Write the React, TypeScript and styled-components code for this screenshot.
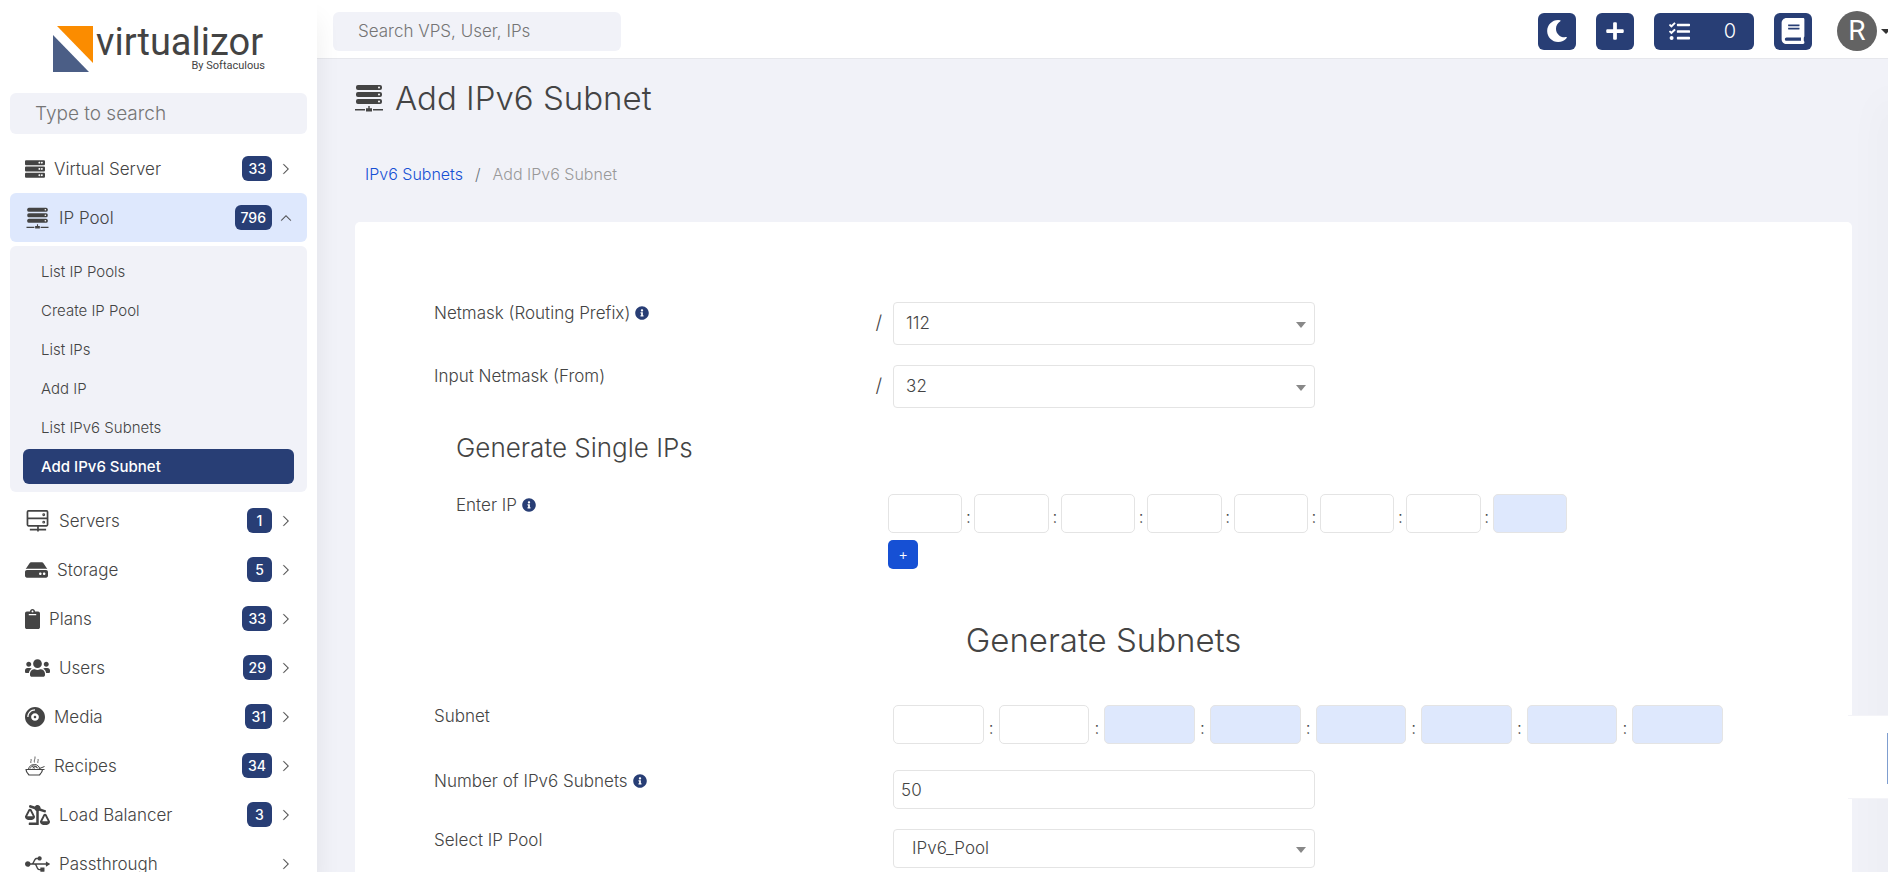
import React from "react";
import styled, { createGlobalStyle, css } from "styled-components";
import {
  FaBalanceScaleRight,
  FaBook,
  FaClipboard,
  FaCompactDisc,
  FaHdd,
  FaInfoCircle,
  FaMoon,
  FaPlus,
  FaServer,
  FaTasks,
  FaUsb,
  FaUsers,
} from "react-icons/fa";
import { BsChevronRight, BsChevronUp } from "react-icons/bs";

const navy = "#283e75";
const pale = "#dee8fd";
const surface = "#f1f2f8";
const line = "#e4e4e4";
const ink = "#444444";

const GlobalStyle = createGlobalStyle`
  *, *::before, *::after { box-sizing: border-box; }
  html { scrollbar-width: none; }
  body {
    margin: 0;
    background: ${surface};
    color: ${ink};
    font-family: Inter, "Open Sans", sans-serif;
    font-size: 17px;
    font-weight: 350;
    line-height: 24px;
  }
  button, input, select { font: inherit; color: inherit; }
  a { color: inherit; text-decoration: none; }
  h1, h2, h3, ul, ol { margin: 0; padding: 0; font-weight: 350; }
  ul, ol { list-style: none; }
`;

const Layout = styled.div`
  display: grid;
  grid-template-columns: 317px minmax(0, 1fr);
  min-height: 100vh;
`;

/* Sidebar */

const SidebarColumn = styled.aside`
  position: sticky;
  top: 0;
  z-index: 3;
  height: 100vh;
  box-shadow: 0 20px 24px rgba(0, 0, 0, 0.07);
`;

const Sidebar = styled.div`
  height: 100%;
  padding: 16px 10px 0;
  overflow: hidden;
  background: #fff;
`;

const LogoLink = styled.a`
  display: flex;
  justify-content: center;
  height: 58px;
  margin-bottom: 19px;
`;

const SearchInput = styled.input<{ $size: "side" | "top" }>`
  display: block;
  width: ${(p) => (p.$size === "side" ? "100%" : "288px")};
  height: ${(p) => (p.$size === "side" ? "41px" : "39px")};
  padding: 0 25px;
  border: 0;
  border-radius: 6px;
  background: ${surface};
  font-size: ${(p) => (p.$size === "side" ? "19px" : "17px")};
  outline: none;
  &::placeholder { color: #757575; opacity: 1; }
`;

const MenuList = styled.ul`
  margin-top: 10px;
`;

const MenuLink = styled.a<{ $open?: boolean }>`
  display: flex;
  align-items: center;
  height: 49px;
  padding: 0 15px;
  border-radius: 6px;
  background: ${(p) => (p.$open ? pale : "transparent")};
`;

const MenuIcon = styled.span<{ $width: number }>`
  display: flex;
  width: ${(p) => p.$width}px;
  margin-right: 9px;
  svg { width: 100%; height: 22px; }
`;

const MenuText = styled.span`
  flex: 1;
`;

const Badge = styled.span`
  min-width: 25px;
  padding: 0 6px;
  border-radius: 6px;
  background: ${navy};
  color: #fff;
  font-size: 14px;
  font-weight: 500;
  line-height: 25px;
  text-align: center;
`;

const Chevron = styled.span`
  display: flex;
  justify-content: center;
  width: 12px;
  margin-left: 8px;
  svg { width: 12px; height: 12px; stroke: ${ink}; stroke-width: 0.4px; }
`;

const Submenu = styled.ul`
  display: flex;
  flex-direction: column;
  gap: 4px;
  margin: 4px 0;
  padding: 8px 13px;
  border-radius: 6px;
  background: ${surface};
`;

const SubmenuLink = styled.a<{ $active?: boolean }>`
  display: block;
  padding: 0 18px;
  border-radius: 6px;
  font-size: 15px;
  line-height: 35px;
  ${(p) =>
    p.$active &&
    css`
      background: ${navy};
      color: #fff;
      font-weight: 500;
    `}
`;

/* Top bar */

const Content = styled.div`
  min-width: 0;
`;

const TopBar = styled.header`
  display: flex;
  align-items: center;
  justify-content: space-between;
  height: 59px;
  padding: 4px 0 0 16px;
  border-bottom: 1px solid #e6e7ec;
  background: #fff;
`;

const Actions = styled.div`
  display: flex;
  align-items: center;
  gap: 20px;
`;

const ActionButton = styled.button<{ $wide?: boolean }>`
  display: flex;
  align-items: center;
  justify-content: ${(p) => (p.$wide ? "space-between" : "center")};
  width: ${(p) => (p.$wide ? "100px" : "38px")};
  height: 37px;
  padding: ${(p) => (p.$wide ? "0 18px 0 15px" : "0")};
  border: 0;
  border-radius: 6px;
  background: ${navy};
  color: #fff;
  font-size: 20px;
`;

const Account = styled.button`
  display: flex;
  align-items: center;
  gap: 4px;
  width: 51px;
  margin-left: 5px;
  padding: 0;
  overflow: hidden;
  border: 0;
  background: none;
`;

const Avatar = styled.span`
  flex: none;
  width: 40px;
  border-radius: 50%;
  background: #636363;
  color: #fff;
  font-family: Roboto, sans-serif;
  font-size: 28px;
  font-weight: 400;
  line-height: 40px;
  text-align: center;
`;

const Caret = styled.span`
  flex: none;
  border: 5px solid transparent;
  border-top-color: #333;
  border-bottom: 0;
`;

/* Page */

const Main = styled.main`
  padding: 19px 36px 0 38px;
`;

const PageTitle = styled.h1`
  display: flex;
  align-items: center;
  gap: 12px;
  font-size: 33px;
  line-height: 40px;
`;

const Breadcrumb = styled.ol`
  display: flex;
  gap: 12px;
  margin: 44px 10px 36px;
  font-size: 16px;
`;

const Crumb = styled.li<{ $current?: boolean }>`
  color: ${(p) => (p.$current ? "#999" : "#1650d4")};
  &:not(:first-child)::before {
    content: "/";
    margin-right: 12px;
    color: #6c757d;
  }
`;

const Card = styled.form`
  padding: 80px 79px 64px;
  border-radius: 5px;
  background: #fff;
`;

const Row = styled.div<{ $loose?: boolean }>`
  display: grid;
  grid-template-columns: 12fr 23fr;
  align-items: start;
  margin-bottom: ${(p) => (p.$loose ? "26px" : "20px")};
`;

const Label = styled.label<{ $inset?: boolean }>`
  display: flex;
  align-items: center;
  gap: 5px;
  padding-left: ${(p) => (p.$inset ? "22px" : "0")};
  line-height: 22px;
  svg { width: 14px; height: 14px; color: ${navy}; }
`;

const SelectWrap = styled.div`
  position: relative;
  width: 48%;
  &::after {
    content: "";
    position: absolute;
    right: 9px;
    top: calc(50% - 2px);
    border: 5px solid transparent;
    border-top: 6px solid #888;
    border-bottom: 0;
    pointer-events: none;
  }
`;

const Slash = styled.span`
  position: absolute;
  right: 100%;
  top: 0;
  margin-right: 11px;
  font-size: 19px;
  line-height: 41px;
`;

const Select = styled.select<{ $compact?: boolean }>`
  display: block;
  width: 100%;
  height: ${(p) => (p.$compact ? "39px" : "43px")};
  padding: ${(p) => (p.$compact ? "0 18px 2px" : "0 12px 2px")};
  border: 1px solid ${line};
  border-radius: 4px;
  background: #fff;
  appearance: none;
`;

const TextInput = styled.input`
  display: block;
  width: 48%;
  height: 39px;
  padding: 0 7px;
  border: 1px solid ${line};
  border-radius: 5px;
  background: #fff;
`;

const SectionTitle = styled.h2<{ $center?: boolean }>`
  margin: ${(p) => (p.$center ? "51px 0 45px" : "18px 0 26px")};
  padding-left: ${(p) => (p.$center ? "0" : "22px")};
  font-size: ${(p) => (p.$center ? "33px" : "26px")};
  line-height: 40px;
  text-align: ${(p) => (p.$center ? "center" : "left")};
`;

const Hextets = styled.div<{ $wide?: boolean }>`
  display: flex;
  width: ${(p) => (p.$wide ? "830px" : "679px")};
  max-width: 100%;
  margin-left: ${(p) => (p.$wide ? "0" : "-5px")};
`;

const Colon = styled.span<{ $wide?: boolean }>`
  flex: none;
  align-self: flex-end;
  width: ${(p) => (p.$wide ? "15px" : "12px")};
  text-align: center;
  line-height: 32px;
`;

const Hextet = styled.input`
  flex: 1 1 0;
  width: 0;
  min-width: 0;
  height: 39px;
  padding: 0 7px;
  border: 1px solid ${line};
  border-radius: 5px;
  background: #fff;
  &:disabled { background: ${pale}; }
`;

const AddButton = styled.button`
  display: block;
  width: 30px;
  height: 29px;
  margin: 7px 0 0 -5px;
  padding: 0;
  border: 0;
  border-radius: 5px;
  background: #1650d4;
  color: #fff;
  font-size: 15px;
  line-height: 29px;
`;

const EdgeShade = styled.div`
  position: fixed;
  top: 100px;
  right: -10px;
  bottom: -40px;
  width: 10px;
  box-shadow: 0 0 40px rgba(0, 0, 0, 0.08);
`;

const EdgeTab = styled.div`
  position: fixed;
  right: 0;
  bottom: 73px;
  width: 40px;
  height: 84px;
  padding: 17px 0 14px;
  border: 1px solid #f4f4f8;
  border-width: 1px 0;
  background: #fff;
  &::after {
    content: "";
    display: block;
    width: 1px;
    height: 100%;
    margin-left: auto;
    background: #7f9ed0;
  }
`;

const Logo = () => (
  <svg width="216" height="58" viewBox="0 -10 216 58" role="img" aria-label="virtualizor">
    <path d="M6 0H42V37Z" fill="#fb8c00" />
    <path d="M2 9V46H38Z" fill="#4b5e86" />
    <text x="45" y="29" fontFamily="Roboto, sans-serif" fontSize="38" fontWeight="400" fill="#434343">
      virtualizor
    </text>
    <text x="214" y="43" textAnchor="end" fontFamily="Roboto, sans-serif" fontSize="11" fontWeight="400" fill="#434343">
      By Softaculous
    </text>
  </svg>
);

const RackIcon = ({ size }: { size: number }) => (
  <svg width={size} height={size} viewBox="0 0 28 28" fill="#444" aria-hidden="true">
    {[1, 8, 15].map((y) => (
      <g key={y}>
        <rect x="1" y={y} width="26" height="5" rx="2" />
        <circle cx="24" cy={y + 2.5} r="1" fill="#fff" />
      </g>
    ))}
    <path d="M0 25h10v1.600H0zM18 25h10v1.600H18zM13.300 22h1.400v2.200h2.300v3.200h-6v-3.200h2.300z" />
  </svg>
);

const ServersIcon = () => (
  <svg width="24" height="24" viewBox="0.500 0.500 23 23" fill="none" stroke="#444" strokeWidth="1.800" aria-hidden="true">
    <rect x="1.500" y="1.500" width="21" height="15.500" rx="1" />
    <path d="M2 9.200h20M4 21h17M12.500 17v6" />
    <circle cx="18.500" cy="5.500" r="0.600" />
    <circle cx="18.500" cy="13.200" r="0.600" />
  </svg>
);

const BowlIcon = () => (
  <svg width="20" height="20" viewBox="0 0 20 20" fill="none" stroke="#444" strokeWidth="1" aria-hidden="true">
    <path d="M.5 13.500h19M1 13.500c0 2 1 3.500 3 5.500h10.500c2-2 3-3.500 3-5.500" strokeWidth="1.200" />
    <path d="M3.500 13c1-3.500 3.500-4.500 6-4.500s4.500 1.500 5.500 4.500M5 12.500c1.500-3 3.500-2 4.500 0M7 10c2.500-.5 5 .5 6 2.500M8 12.500c.5-2 3-2.500 4-1M14.500 12.500l5-2" />
    <path d="M6 7c-1-1.500.8-2 0-4M9.500 6.500C8.500 4.500 10.500 3 10 .5M13 7c-1-1.500.8-2 0-4" strokeWidth="0.800" />
  </svg>
);

type Item = { name: string; count?: number; icon: React.ReactNode; width: number; open?: boolean };

const menu: Item[] = [
  { name: "Virtual Server", count: 33, icon: <FaServer />, width: 20 },
  { name: "IP Pool", count: 796, icon: <RackIcon size={24} />, width: 25, open: true },
  { name: "Servers", count: 1, icon: <ServersIcon />, width: 25 },
  { name: "Storage", count: 5, icon: <FaHdd />, width: 23 },
  { name: "Plans", count: 33, icon: <FaClipboard />, width: 15 },
  { name: "Users", count: 29, icon: <FaUsers />, width: 25 },
  { name: "Media", count: 31, icon: <FaCompactDisc />, width: 20 },
  { name: "Recipes", count: 34, icon: <BowlIcon />, width: 20 },
  { name: "Load Balancer", count: 3, icon: <FaBalanceScaleRight />, width: 25 },
  { name: "Passthrough", icon: <FaUsb />, width: 25 },
];

const submenu = ["List IP Pools", "Create IP Pool", "List IPs", "Add IP", "List IPv6 Subnets", "Add IPv6 Subnet"];

const HextetFields = ({ id, enabled, wide }: { id: string; enabled: number; wide?: boolean }) => (
  <Hextets $wide={wide}>
    {Array.from({ length: 8 }, (_, i) => (
      <React.Fragment key={i}>
        {i > 0 && <Colon $wide={wide}>:</Colon>}
        <Hextet id={i === 0 ? id : undefined} aria-label={`Part ${i + 1}`} disabled={i >= enabled} />
      </React.Fragment>
    ))}
  </Hextets>
);

const App = () => (
  <>
    <GlobalStyle />
    <Layout>
      <SidebarColumn>
        <Sidebar>
          <LogoLink href="#">
            <Logo />
          </LogoLink>
          <SearchInput $size="side" type="text" placeholder="Type to search" aria-label="Type to search" />
          <nav>
            <MenuList>
              {menu.map((item) => (
                <li key={item.name}>
                  <MenuLink href="#" $open={item.open}>
                    <MenuIcon $width={item.width}>{item.icon}</MenuIcon>
                    <MenuText>{item.name}</MenuText>
                    {item.count !== undefined && <Badge>{item.count}</Badge>}
                    <Chevron>{item.open ? <BsChevronUp /> : <BsChevronRight />}</Chevron>
                  </MenuLink>
                  {item.open && (
                    <Submenu>
                      {submenu.map((name) => (
                        <li key={name}>
                          <SubmenuLink href="#" $active={name === "Add IPv6 Subnet"}>
                            {name}
                          </SubmenuLink>
                        </li>
                      ))}
                    </Submenu>
                  )}
                </li>
              ))}
            </MenuList>
          </nav>
        </Sidebar>
      </SidebarColumn>
      <Content>
        <TopBar>
          <SearchInput
            $size="top"
            type="text"
            placeholder="Search VPS, User, IPs"
            aria-label="Search VPS, User, IPs"
          />
          <Actions>
            <ActionButton type="button" aria-label="Dark mode">
              <FaMoon size={22} />
            </ActionButton>
            <ActionButton type="button" aria-label="Add">
              <FaPlus size={20} />
            </ActionButton>
            <ActionButton type="button" aria-label="Tasks" $wide>
              <FaTasks size={21} />
              <span>0</span>
            </ActionButton>
            <ActionButton type="button" aria-label="Documentation">
              <FaBook size={26} />
            </ActionButton>
            <Account type="button" aria-label="Account">
              <Avatar>R</Avatar>
              <Caret />
            </Account>
          </Actions>
        </TopBar>
        <Main>
          <PageTitle>
            <RackIcon size={28} />
            Add IPv6 Subnet
          </PageTitle>
          <nav aria-label="Breadcrumb">
            <Breadcrumb>
              <Crumb>
                <a href="#">IPv6 Subnets</a>
              </Crumb>
              <Crumb $current>Add IPv6 Subnet</Crumb>
            </Breadcrumb>
          </nav>
          <Card>
            <Row>
              <Label htmlFor="netmask">
                Netmask (Routing Prefix) <FaInfoCircle />
              </Label>
              <SelectWrap>
                <Slash>/</Slash>
                <Select id="netmask" defaultValue="112">
                  <option>112</option>
                </Select>
              </SelectWrap>
            </Row>
            <Row>
              <Label htmlFor="input-netmask">Input Netmask (From)</Label>
              <SelectWrap>
                <Slash>/</Slash>
                <Select id="input-netmask" defaultValue="32">
                  <option>32</option>
                </Select>
              </SelectWrap>
            </Row>
            <SectionTitle>Generate Single IPs</SectionTitle>
            <Row>
              <Label htmlFor="ip" $inset>
                Enter IP <FaInfoCircle />
              </Label>
              <div>
                <HextetFields id="ip" enabled={7} />
                <AddButton type="button">+</AddButton>
              </div>
            </Row>
            <SectionTitle $center>Generate Subnets</SectionTitle>
            <Row $loose>
              <Label htmlFor="subnet">Subnet</Label>
              <HextetFields id="subnet" enabled={2} wide />
            </Row>
            <Row>
              <Label htmlFor="count">
                Number of IPv6 Subnets <FaInfoCircle />
              </Label>
              <TextInput id="count" type="text" defaultValue="50" />
            </Row>
            <Row>
              <Label htmlFor="pool">Select IP Pool</Label>
              <SelectWrap>
                <Select id="pool" $compact defaultValue="IPv6_Pool">
                  <option>IPv6_Pool</option>
                </Select>
              </SelectWrap>
            </Row>
          </Card>
        </Main>
      </Content>
    </Layout>
    <EdgeShade />
    <EdgeTab />
  </>
);

export default App;
